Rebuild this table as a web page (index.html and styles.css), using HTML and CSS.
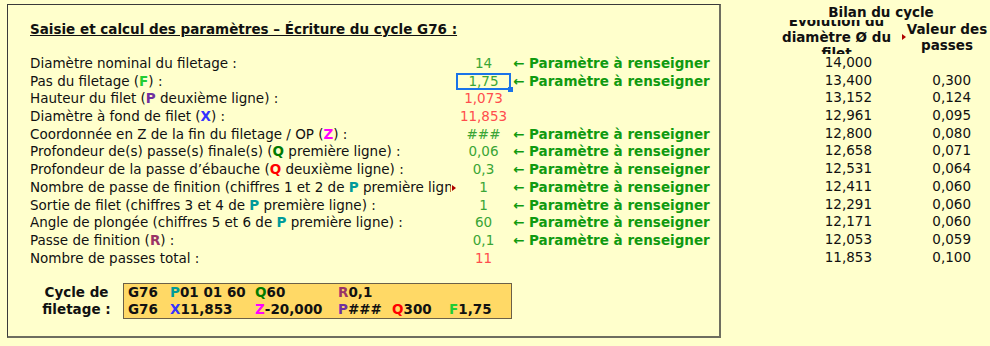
FILE: index.html
```html
<!DOCTYPE html>
<html lang="fr">
<head>
<meta charset="utf-8">
<link rel="stylesheet" href="styles.css">
</head>
<body>
<div class="page">
  <div class="panel">
    <div class="title">Saisie et calcul des paramètres – Écriture du cycle G76 :</div>
    <div class="rows">
      <div class="row"><div class="lbl">Diamètre nominal du filetage :</div><div class="val in">14</div><div class="hint">← Paramètre à renseigner</div></div>
      <div class="row"><div class="lbl">Pas du filetage (<b class="c-f">F</b>) :</div><div class="val in sel">1,75<span class="handle"></span></div><div class="hint">← Paramètre à renseigner</div></div>
      <div class="row"><div class="lbl">Hauteur du filet (<b class="c-p">P</b> deuxième ligne) :</div><div class="val out">1,073</div></div>
      <div class="row"><div class="lbl">Diamètre à fond de filet (<b class="c-x">X</b>) :</div><div class="val out">11,853</div></div>
      <div class="row"><div class="lbl">Coordonnée en Z de la fin du filetage / OP (<b class="c-z">Z</b>) :</div><div class="val in">###</div><div class="hint">← Paramètre à renseigner</div></div>
      <div class="row"><div class="lbl">Profondeur de(s) passe(s) finale(s) (<b class="c-q1">Q</b> première ligne) :</div><div class="val in">0,06</div><div class="hint">← Paramètre à renseigner</div></div>
      <div class="row"><div class="lbl">Profondeur de la passe d’ébauche (<b class="c-q2">Q</b> deuxième ligne) :</div><div class="val in">0,3</div><div class="hint">← Paramètre à renseigner</div></div>
      <div class="row"><div class="lbl"><span class="t">Nombre de passe de finition (chiffres 1 et 2 de <b class="c-p1">P</b> première ligne) :</span><span class="mark"></span></div><div class="val in">1</div><div class="hint">← Paramètre à renseigner</div></div>
      <div class="row"><div class="lbl">Sortie de filet (chiffres 3 et 4 de <b class="c-p1">P</b> première ligne) :</div><div class="val in">1</div><div class="hint">← Paramètre à renseigner</div></div>
      <div class="row"><div class="lbl">Angle de plongée (chiffres 5 et 6 de <b class="c-p1">P</b> première ligne) :</div><div class="val in">60</div><div class="hint">← Paramètre à renseigner</div></div>
      <div class="row"><div class="lbl">Passe de finition (<b class="c-r">R</b>) :</div><div class="val in">0,1</div><div class="hint">← Paramètre à renseigner</div></div>
      <div class="row"><div class="lbl">Nombre de passes total :</div><div class="val out">11</div></div>
    </div>
    <div class="cycle">
      <div class="cycle-lbl">Cycle de<br>filetage :</div>
      <div class="cycle-box">
        <div class="cl"><span class="g">G76</span><span class="c1"><b class="c-p1">P</b>01 01 60</span><span class="c2"><b class="c-q1">Q</b>60</span><span class="c3"><b class="c-r">R</b>0,1</span></div>
        <div class="cl"><span class="g">G76</span><span class="c1"><b class="c-x">X</b>11,853</span><span class="c2"><b class="c-z">Z</b>-20,000</span><span class="c3"><b class="c-p">P</b>###</span><span class="c4"><b class="c-q2">Q</b>300</span><span class="c5"><b class="c-f">F</b>1,75</span></div>
      </div>
    </div>
  </div>
  <div class="bilan">
    <div class="bilan-title">Bilan du cycle</div>
    <div class="bilan-head">
      <div class="h1"><span>Évolution du diamètre Ø du filet</span></div>
      <span class="hmark"></span>
      <div class="h2">Valeur des<br>passes</div>
    </div>
    <div class="brow"><div class="d">14,000</div><div class="p"></div></div>
    <div class="brow"><div class="d">13,400</div><div class="p">0,300</div></div>
    <div class="brow"><div class="d">13,152</div><div class="p">0,124</div></div>
    <div class="brow"><div class="d">12,961</div><div class="p">0,095</div></div>
    <div class="brow"><div class="d">12,800</div><div class="p">0,080</div></div>
    <div class="brow"><div class="d">12,658</div><div class="p">0,071</div></div>
    <div class="brow"><div class="d">12,531</div><div class="p">0,064</div></div>
    <div class="brow"><div class="d">12,411</div><div class="p">0,060</div></div>
    <div class="brow"><div class="d">12,291</div><div class="p">0,060</div></div>
    <div class="brow"><div class="d">12,171</div><div class="p">0,060</div></div>
    <div class="brow"><div class="d">12,053</div><div class="p">0,059</div></div>
    <div class="brow"><div class="d">11,853</div><div class="p">0,100</div></div>
  </div>
</div>
</body>
</html>
```
FILE: styles.css
```css
html, body {
  margin: 0;
  padding: 0;
  background: #ffffcc;
  overflow: hidden;
}
body {
  font-family: "DejaVu Sans", "Liberation Sans", sans-serif;
  font-size: 13.5px;
  color: #111;
  width: 990px;
  height: 346px;
}
.page {
  display: flex;
  align-items: flex-start;
}
.panel {
  margin: 4px 0 0 7px;
  width: 712px;
  height: 331px;
  border: 1px solid #3a3a3a;
  border-right: 2px solid #6e6e60;
  border-bottom: 2px solid #6e6e60;
  box-sizing: content-box;
  padding: 0;
}
.title {
  margin: 16px 0 0 22px;
  line-height: 16px;
  font-weight: bold;
  text-decoration: underline;
}
.rows {
  margin-top: 18px;
  padding-left: 22px;
}
.row {
  display: flex;
  height: 17.7px;
  line-height: 17.7px;
  align-items: center;
}
.lbl {
  width: 426px;
  white-space: nowrap;
  overflow: hidden;
  position: relative;
}
.lbl .t {
  display: inline-block;
  width: 421px;
  overflow: hidden;
  vertical-align: top;
}
.mark {
  position: absolute;
  right: 0;
  top: 6px;
  width: 0;
  height: 0;
  border-top: 3px solid transparent;
  border-bottom: 3px solid transparent;
  border-left: 4px solid #b00000;
}
.val {
  width: 55px;
  text-align: center;
  box-sizing: border-box;
  position: relative;
  height: 17.7px;
}
.val.in { color: #3aa535; }
.val.out { color: #ff4d4d; }
.val.sel {
  border: 2px solid #1a73e8;
  line-height: 13.7px;
}
.handle {
  position: absolute;
  right: -4px;
  bottom: -4px;
  width: 5px;
  height: 5px;
  background: #1a73e8;
}
.hint {
  margin-left: 2px;
  color: #109a10;
  font-weight: bold;
  white-space: nowrap;
}
.c-f { color: #22cc33; }
.c-p { color: #7030a0; }
.c-x { color: #3333ff; }
.c-z { color: #ff00ff; }
.c-q1 { color: #007a00; }
.c-q2 { color: #ff0000; }
.c-p1 { color: #009a9a; }
.c-r { color: #993366; }
.cycle {
  display: flex;
  align-items: center;
  margin-top: 16px;
  margin-left: 22px;
}
.cycle-lbl {
  width: 93px;
  text-align: center;
  font-weight: bold;
  line-height: 17px;
}
.cycle-box {
  width: 387px;
  border: 1px solid #6b6048;
  background: #ffd966;
  font-weight: bold;
  color: #111;
}
.cl {
  display: flex;
  height: 17px;
  line-height: 17px;
  padding-left: 4px;
  white-space: nowrap;
}
.cl .g { width: 42px; }
.cl .c1 { width: 85px; }
.cl .c2 { width: 83px; }
.cl .c3 { width: 54px; }
.cl .c4 { width: 57px; }
.bilan {
  width: 269px;
  flex: none;
}
.bilan-title {
  margin-top: 4px;
  margin-left: 48px;
  width: 224px;
  text-align: center;
  font-weight: bold;
  line-height: 16px;
}
.bilan-head {
  display: flex;
  align-items: center;
  height: 34px;
  margin-left: 48px;
  font-weight: bold;
  line-height: 16px;
}
.h1 {
  width: 138px;
  height: 34px;
  overflow: hidden;
  display: flex;
  align-items: center;
  justify-content: center;
  text-align: center;
}
.h1 span { display: block; flex: none; width: 138px; }
.hmark {
  width: 0;
  height: 0;
  border-top: 3px solid transparent;
  border-bottom: 3px solid transparent;
  border-left: 4px solid #b00000;
  margin-left: -2px;
  margin-right: -2px;
  flex: none;
}
.h2 {
  width: 86px;
  flex: none;
  text-align: center;
  white-space: nowrap;
}
.brow {
  display: flex;
  height: 17.7px;
  line-height: 17.7px;
}
.brow .d { width: 151px; text-align: right; }
.brow .p { width: 99px; text-align: right; }
```
